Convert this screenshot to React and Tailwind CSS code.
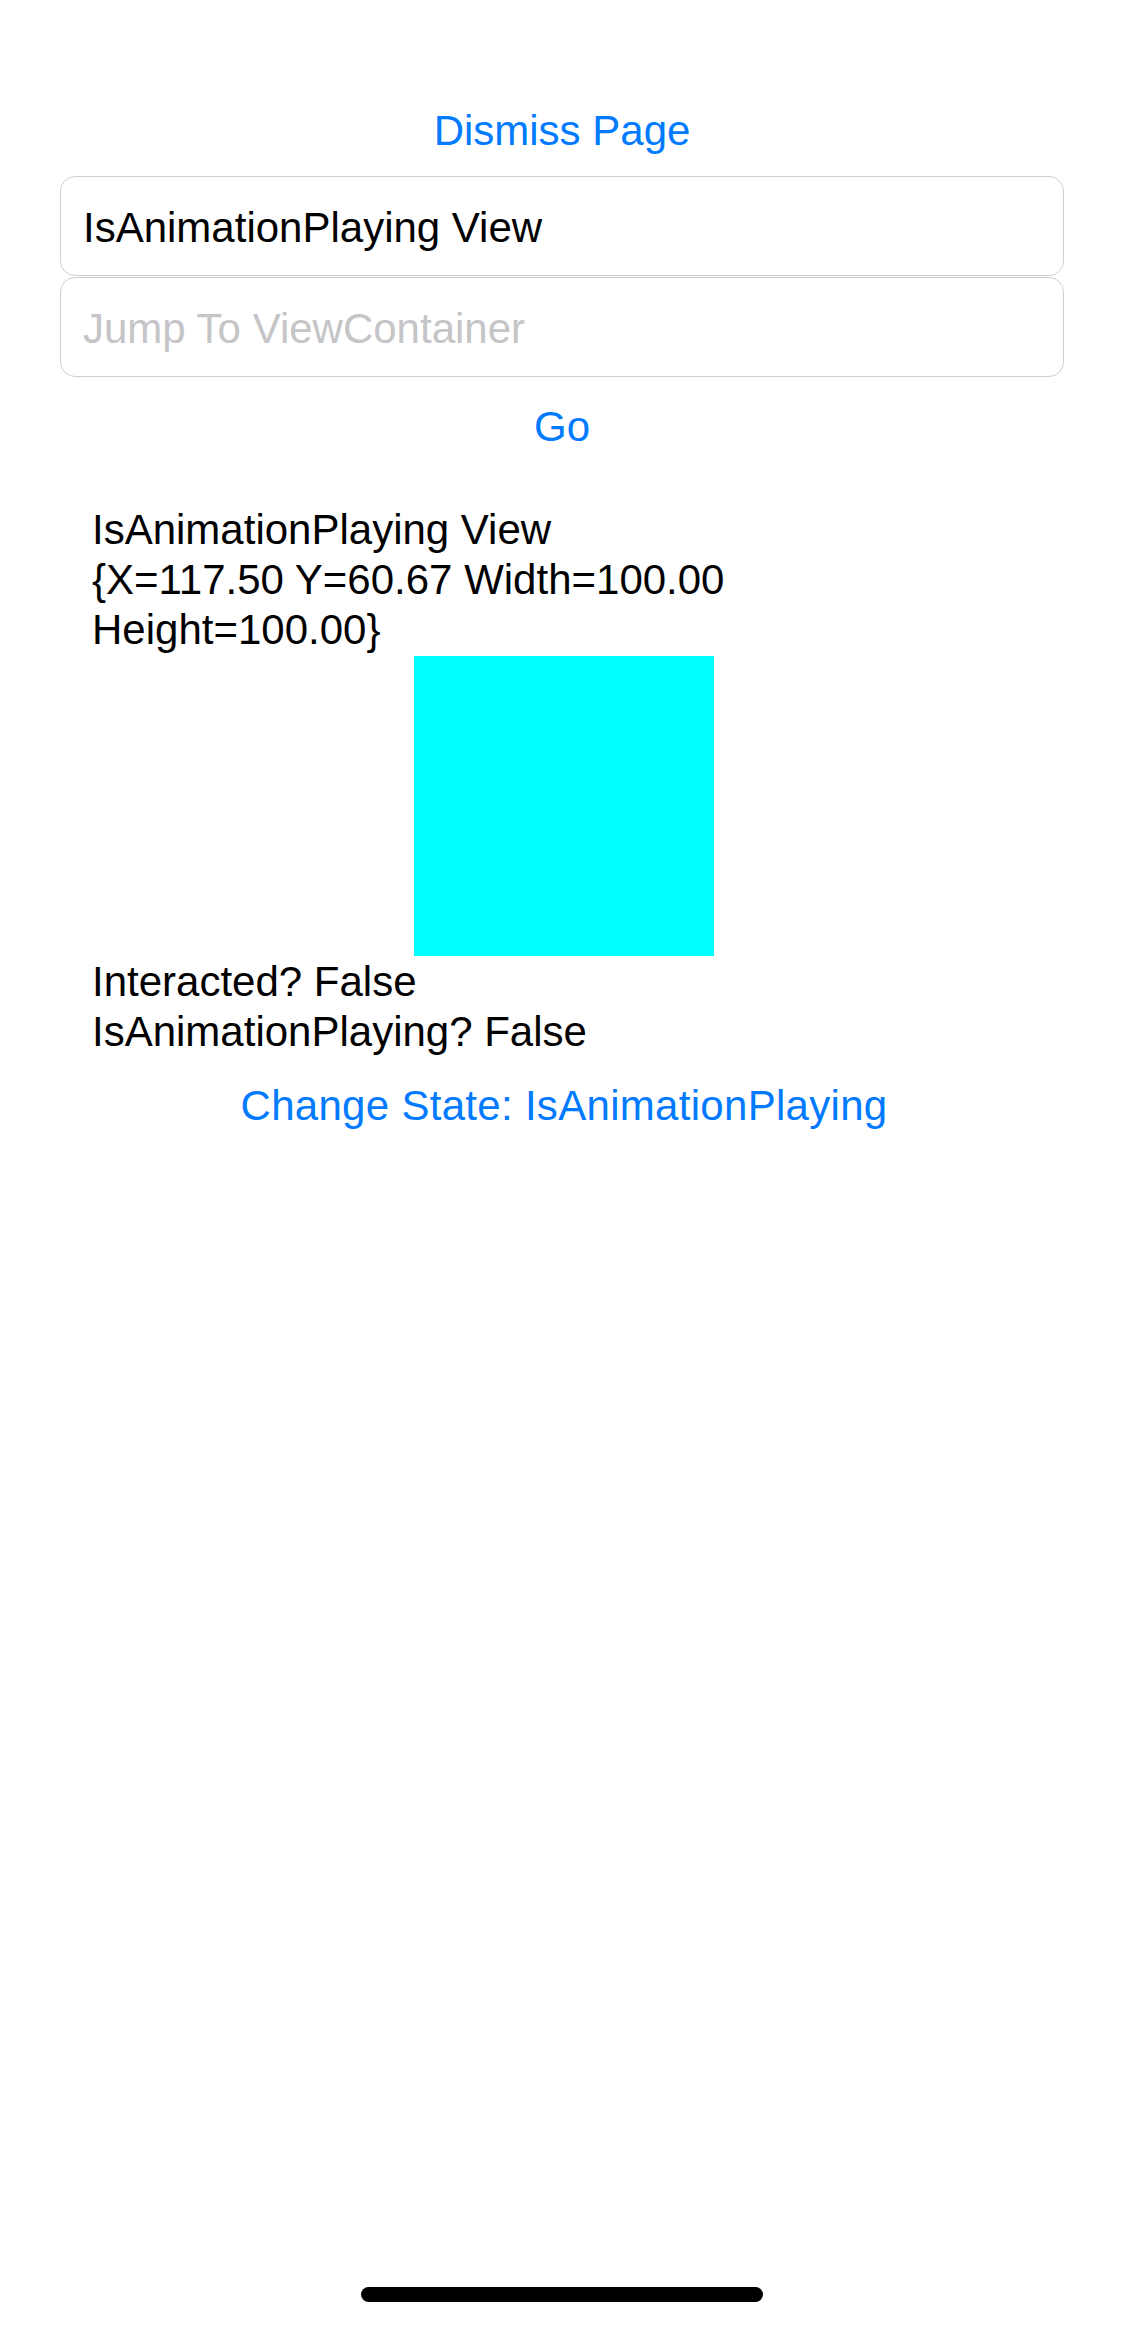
import React from 'react';

function App() {
  return (
    <div className="min-h-[2326px] w-[1124px] bg-white flex flex-col font-['Liberation_Sans',Arial,sans-serif] text-black">
      <div className="pt-[107px] px-[60px] flex flex-col">
        {/* Dismiss button */}
        <button className="h-[48px] leading-[48px] text-[42px] text-[#007aff] text-center">
          Dismiss Page
        </button>

        {/* Text fields */}
        <div className="mt-[21px] h-[100px] border border-[#cfcfd3] rounded-[15px] flex items-center pl-[22px] pt-[3px] text-[42px] leading-[48px]">
          IsAnimationPlaying View
        </div>
        <div className="mt-[1px] h-[100px] border border-[#cfcfd3] rounded-[15px] flex items-center pl-[22px] pt-[3px] text-[42px] leading-[48px] text-[#c5c5c7]">
          Jump To ViewContainer
        </div>

        <button className="mt-[26px] h-[48px] leading-[48px] text-[42px] text-[#007aff] text-center">
          Go
        </button>

        {/* View info */}
        <div className="mt-[54px] pl-[32px] text-[42px] leading-[50px]">
          <div>IsAnimationPlaying View</div>
          <div>{'{X=117.50 Y=60.67 Width=100.00'}</div>
          <div>{'Height=100.00}'}</div>
        </div>

        <div className="mt-[1px] ml-[354px] w-[300px] h-[300px] bg-[#00ffff]" />

        <div className="pt-[1px] pl-[32px] text-[42px] leading-[50px]">
          <div>Interacted? False</div>
          <div>IsAnimationPlaying? False</div>
        </div>

        <button className="mt-[25px] h-[48px] leading-[48px] text-[42px] text-[#007aff] text-center pl-[4px] tracking-[0.3px]">
          Change State: IsAnimationPlaying
        </button>
      </div>

      {/* Home indicator */}
      <div className="mt-auto mb-[24px] mx-auto w-[402px] h-[15px] rounded-full bg-black" />
    </div>
  );
}

export default App;
